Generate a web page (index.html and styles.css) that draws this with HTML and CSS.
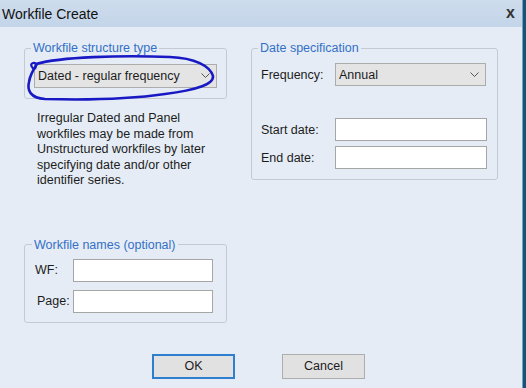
FILE: index.html
```html
<!DOCTYPE html>
<html lang="en">
<head>
    <meta charset="UTF-8">
    <meta name="viewport" content="width=device-width, initial-scale=1.0">
    <title>Workfile Create</title>
    <link rel="stylesheet" href="styles.css">
</head>
<body>
    <div class="window">
        <div class="dialog">
            <div class="titlebar">
                <span class="title">Workfile Create</span>
                <span class="close">x</span>
            </div>

            <div class="content">
                <div class="columns">
                    <div class="left">
                        <fieldset class="group group-type">
                            <legend>Workfile structure type</legend>
                            <div class="select select-type">
                                <span>Dated - regular frequency</span>
                                <svg class="chev" width="9" height="6" viewBox="0 0 9 6"><path d="M0.5 0.5 L4.5 4.5 L8.5 0.5" fill="none" stroke="#555" stroke-width="1"/></svg>
                            </div>
                        </fieldset>

                        <p class="note">Irregular Dated and Panel workfiles may be made from Unstructured workfiles by later specifying date and/or other identifier series.</p>

                        <fieldset class="group group-names">
                            <legend>Workfile names (optional)</legend>
                            <div class="names-grid">
                                <label>WF:</label>
                                <div class="textbox"></div>
                                <label class="page-label">Page:</label>
                                <div class="textbox"></div>
                            </div>
                        </fieldset>
                    </div>

                    <fieldset class="group group-date">
                        <legend>Date specification</legend>
                        <div class="date-grid">
                            <label>Frequency:</label>
                            <div class="select select-freq">
                                <span>Annual</span>
                                <svg class="chev" width="9" height="6" viewBox="0 0 9 6"><path d="M0.5 0.5 L4.5 4.5 L8.5 0.5" fill="none" stroke="#555" stroke-width="1"/></svg>
                            </div>
                            <label class="start-label">Start date:</label>
                            <div class="textbox start-box"></div>
                            <label>End date:</label>
                            <div class="textbox"></div>
                        </div>
                    </fieldset>
                </div>

                <div class="actions">
                    <button class="btn btn-ok">OK</button>
                    <button class="btn">Cancel</button>
                </div>
            </div>

            <!-- hand drawn marker circle over the structure type box -->
            <svg class="scribble" width="230" height="110" viewBox="0 0 230 110">
                <path d="M36 64 C60 57 120 55 170 57 C195 58 210 66 213 76 C214 85 195 90 165 94 C130 99 80 100 45 99 C30 98 27 90 29 82 C30 75 33 70 37 64" fill="none" stroke="#1818c4" stroke-width="2.6" stroke-linecap="round"/>
                <path d="M35 69 C31 68 30 64 33 63 C36 62 37 65 35 69" fill="none" stroke="#1818c4" stroke-width="2.2"/>
            </svg>
        </div>
    </div>
</body>
</html>
```

FILE: styles.css
```css
body {
    margin: 0;
    padding: 0;
    font-family: "Liberation Sans", Arial, sans-serif;
    font-size: 12.5px;
    color: #1c1c1c;
    background-color: #e5ecf5;
}

.window {
    width: 526px;
    height: 388px;
    display: flex;
    box-sizing: border-box;
    border-right: 3px solid #1b5273;
    overflow: hidden;
}

.dialog {
    position: relative;
    flex: 1;
    border-right: 1px solid #6da3c4;
    background-color: #e5ecf5;
}

.titlebar {
    height: 27px;
    display: flex;
    align-items: center;
    justify-content: space-between;
    padding: 0 7px 0 2px;
    background: linear-gradient(#cedcec, #c3d5e9);
}

.title {
    font-size: 14px;
    color: #111;
}

.close {
    font-size: 16px;
    font-weight: bold;
    color: #333;
    margin-top: -2px;
}

.content {
    padding: 14px 24px 0 24px;
}

.columns {
    display: flex;
    gap: 24px;
    align-items: flex-start;
}

.left {
    width: 203px;
    display: flex;
    flex-direction: column;
}

.group {
    margin: 0;
    border: 1px solid #c4cad2;
    border-radius: 3px;
    min-width: 0;
}

.group legend {
    font-size: 12.5px;
    line-height: 14px;
    color: #3470c6;
    padding: 0 2px;
    margin-left: -3px;
}

.group-type {
    padding: 9px 9px 10px 9px;
}

.select {
    display: flex;
    align-items: center;
    justify-content: space-between;
    box-sizing: border-box;
    border: 1px solid #acacac;
    background-color: #e4e4e4;
    padding: 0 6px 0 3px;
}

.select-type {
    height: 24px;
}

.select-freq {
    height: 23px;
    margin-right: 1px;
}

.chev {
    display: block;
}

.note {
    margin: 12px 0 0 0;
    padding: 0 6px 0 13px;
    line-height: 15.5px;
}

.group-names {
    margin-top: 49px;
    padding: 7px 13px 9px 10px;
}

.names-grid {
    display: grid;
    grid-template-columns: 38px 1fr;
    row-gap: 8px;
    align-items: center;
}

.page-label {
    padding-left: 2px;
}

.textbox {
    height: 23px;
    box-sizing: border-box;
    border: 1px solid #a6a6a6;
    background-color: #ffffff;
}

.group-date {
    width: 247px;
    box-sizing: border-box;
    padding: 8px 10px 10px 9px;
}

.date-grid {
    display: grid;
    grid-template-columns: 74px 1fr;
    row-gap: 5px;
    align-items: center;
}

.start-label,
.start-box {
    margin-top: 27px;
}

.actions {
    display: flex;
    gap: 47px;
    margin-top: 31px;
    padding-left: 128px;
}

.btn {
    width: 83px;
    height: 25px;
    font-family: "Liberation Sans", Arial, sans-serif;
    font-size: 12.5px;
    color: #1c1c1c;
    background-color: #e1e1e1;
    border: 1px solid #adadad;
    padding: 0;
}

.btn-ok {
    border: 2px solid #2f7fd1;
}

.scribble {
    position: absolute;
    left: 0;
    top: 0;
    pointer-events: none;
}
```
